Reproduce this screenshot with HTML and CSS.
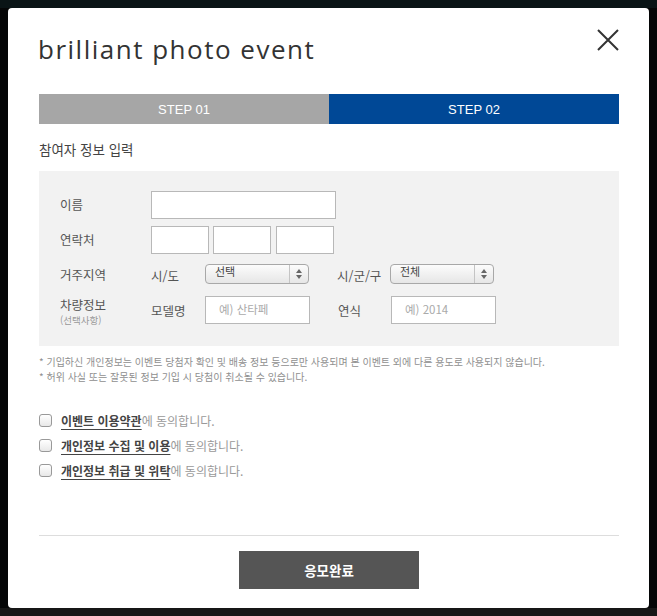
FILE: index.html
```html
<!DOCTYPE html>
<html lang="ko">
<head>
<meta charset="utf-8">
<title>brilliant photo event</title>
<link rel="stylesheet" href="styles.css">
</head>
<body>
<div class="modal">
  <div class="head">
    <h1 class="title">brilliant photo event</h1>
    <button class="close" aria-label="닫기">
      <svg width="22" height="22" viewBox="0 0 22 22"><path d="M1 1L21 21M21 1L1 21" stroke="#333" stroke-width="2" fill="none"/></svg>
    </button>
  </div>
  <div class="steps">
    <div class="step step-off">STEP 01</div>
    <div class="step step-on">STEP 02</div>
  </div>
  <h2 class="section">참여자 정보 입력</h2>
  <div class="formbox">
    <div class="row">
      <div class="label">이름</div>
      <div class="field"><span class="input w-name"></span></div>
    </div>
    <div class="row">
      <div class="label">연락처</div>
      <div class="field phone"><span class="input w-tel"></span><span class="input w-tel"></span><span class="input w-tel"></span></div>
    </div>
    <div class="row">
      <div class="label">거주지역</div>
      <div class="field">
        <span class="sub">시/도</span>
        <span class="select"><span class="sel-text">선택</span><span class="sel-arrow"><i class="up"></i><i class="down"></i></span></span>
        <span class="sub sub2">시/군/구</span>
        <span class="select"><span class="sel-text">전체</span><span class="sel-arrow"><i class="up"></i><i class="down"></i></span></span>
      </div>
    </div>
    <div class="row">
      <div class="label lab2"><span>차량정보</span><small>(선택사항)</small></div>
      <div class="field">
        <span class="sub">모델명</span>
        <span class="input w-car ph">예) 산타페</span>
        <span class="sub sub2">연식</span>
        <span class="input w-car ph">예) 2014</span>
      </div>
    </div>
  </div>
  <ul class="notes">
    <li>* 기입하신 개인정보는 이벤트 당첨자 확인 및 배송 정보 등으로만 사용되며 본 이벤트 외에 다른 용도로 사용되지 않습니다.</li>
    <li>* 허위 사실 또는 잘못된 정보 기입 시 당첨이 취소될 수 있습니다.</li>
  </ul>
  <ul class="agree">
    <li><span class="cb"></span><b>이벤트 이용약관</b>에 동의합니다.</li>
    <li><span class="cb"></span><b>개인정보 수집 및 이용</b>에 동의합니다.</li>
    <li><span class="cb"></span><b>개인정보 취급 및 위탁</b>에 동의합니다.</li>
  </ul>
  <div class="foot">
    <button class="submit">응모완료</button>
  </div>
</div>
</body>
</html>
```

FILE: styles.css
```css
html, body { margin: 0; padding: 0; }
body {
  width: 657px;
  height: 616px;
  overflow: hidden;
  background: linear-gradient(to bottom, #0a1416 0, #0a1416 8px, #050607 8px, #050607 608px, #171717 608px);
  font-family: "Noto Sans CJK KR", "Liberation Sans", sans-serif;
  padding: 8px;
  box-sizing: border-box;
}
.modal {
  width: 641px;
  height: 600px;
  background: #fff;
  border-radius: 4px;
  box-sizing: border-box;
  padding: 0 30px 0 31px;
  display: flex;
  flex-direction: column;
}
.head {
  display: flex;
  justify-content: space-between;
  align-items: flex-start;
  height: 86px;
}
.title {
  margin: 26px 0 0 -1px;
  font-family: "Open Sans", sans-serif;
  font-weight: 400;
  font-size: 26px;
  line-height: 30px;
  letter-spacing: 1.5px;
  color: #333;
}
.close {
  margin: 21px 0 0 0;
  padding: 0;
  border: 0;
  background: none;
  width: 22px;
  height: 22px;
  line-height: 0;
}
.steps {
  display: flex;
  height: 30px;
}
.step {
  flex: 1;
  display: flex;
  align-items: center;
  justify-content: center;
  color: #fff;
  font-family: "Liberation Sans", sans-serif;
  font-size: 13px;
}
.step-off { background: #a6a6a6; }
.step-on { background: #004896; }
.section {
  margin: 0;
  padding-top: 15px;
  height: 47px;
  box-sizing: border-box;
  font-size: 13.5px;
  font-weight: 400;
  line-height: 20px;
  color: #444;
}
.formbox {
  background: #f2f2f2;
  padding: 20px 0 22px 21px;
  display: flex;
  flex-direction: column;
  gap: 7px;
}
.row {
  display: flex;
  align-items: center;
  height: 28px;
}
.label {
  width: 91px;
  font-size: 12.5px;
  color: #555;
  line-height: 16px;
}
.lab2 {
  display: flex;
  flex-direction: column;
  align-self: flex-start;
  padding-top: 2px;
}
.lab2 span { display: block; line-height: 14px; }
.lab2 small { display: block; font-size: 9.5px; color: #999; line-height: 12px; margin-top: 2px; }
.field { display: flex; align-items: center; }
.phone { gap: 4px; }
.input {
  display: block;
  box-sizing: border-box;
  height: 28px;
  background: #fff;
  border: 1px solid #b8b8b8;
}
.w-name { width: 185px; }
.w-tel { width: 58px; }
.phone .w-tel:last-child { margin-left: 1px; }
.w-car { width: 105px; }
.ph {
  font-size: 11.5px;
  color: #aaa;
  padding-left: 13px;
  line-height: 24px;
}
.sub {
  width: 54px;
  font-size: 12.5px;
  color: #555;
}
.sub2 { margin-left: 28px; width: 53px; }
.select {
  display: flex;
  box-sizing: border-box;
  width: 104px;
  height: 20px;
  border: 1px solid #a8a8a8;
  border-radius: 4px;
  background: linear-gradient(#fcfcfc, #e6e6e6);
  margin-top: -3px;
}
.sel-text {
  flex: 1;
  font-size: 11px;
  color: #444;
  padding-left: 9px;
  line-height: 12px;
}
.sel-arrow {
  width: 18px;
  border-left: 1px solid #c4c4c4;
  display: flex;
  flex-direction: column;
  align-items: center;
  justify-content: center;
  gap: 2px;
}
.sel-arrow i {
  display: block;
  width: 0;
  height: 0;
  border-left: 3px solid transparent;
  border-right: 3px solid transparent;
}
.sel-arrow .up { border-bottom: 4px solid #666; }
.sel-arrow .down { border-top: 4px solid #666; }
.notes {
  list-style: none;
  margin: 0;
  padding: 8px 0 0 0;
  font-size: 10px;
  line-height: 15px;
  color: #8f8f8f;
  height: 54px;
}
.agree {
  list-style: none;
  margin: 0;
  padding: 0;
  font-size: 12px;
  line-height: 25px;
  color: #999;
}
.agree li { display: flex; align-items: center; }
.agree b {
  font-weight: 700;
  color: #444;
  text-decoration: underline;
  text-underline-offset: 3px;
}
.cb {
  display: block;
  width: 11px;
  height: 11px;
  border: 1px solid #999;
  border-radius: 3px;
  background: linear-gradient(#fff, #e8e8e8);
  margin-right: 9px;
}
.foot {
  margin-top: auto;
  margin-bottom: 19px;
  border-top: 1px solid #ddd;
  padding-top: 15px;
  display: flex;
  justify-content: center;
}
.submit {
  width: 180px;
  height: 38px;
  border: 0;
  background: #555;
  color: #fff;
  font-family: "Noto Sans CJK KR", sans-serif;
  font-size: 13.5px;
  font-weight: 700;
}
```
